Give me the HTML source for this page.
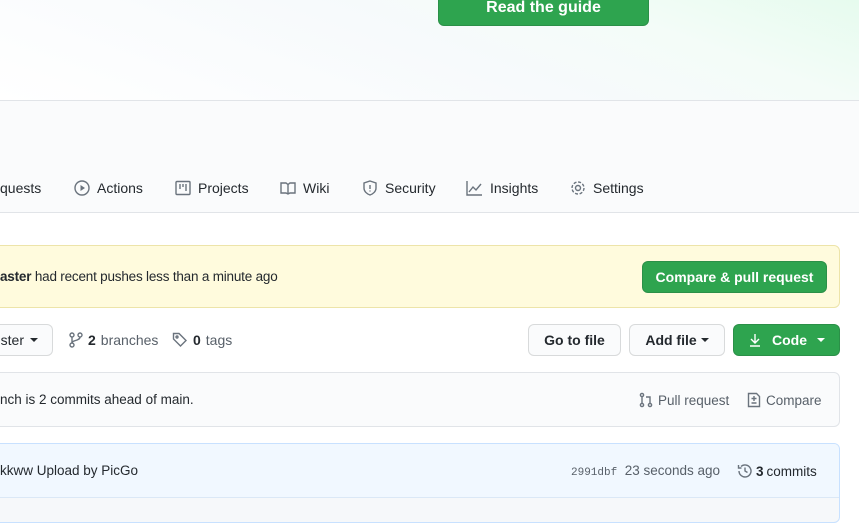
<!DOCTYPE html><html><head><style>
*{box-sizing:border-box;margin:0;padding:0}
body{width:859px;height:513px;overflow:hidden;position:relative;font-family:"Liberation Sans",sans-serif;font-size:14px;color:#24292e;background:#fff}
.a{position:absolute}
.hero{left:0;top:0;width:859px;height:101px;border-bottom:1px solid #e1e4e8;background:linear-gradient(200deg,#e6fbee 0%,#f4fcf8 25%,#f7fafc 50%,#fff 100%)}
.btn{position:absolute;border:1px solid rgba(27,31,35,.15);border-radius:6px;background:#fafbfc;font-weight:bold;display:flex;align-items:center;justify-content:center;font-size:14px}
.g{background:#2ea44f;color:#fff;border-color:rgba(27,31,35,.15)}
.nav{left:0;top:101px;width:859px;height:112px;background:#fafbfc;border-bottom:1px solid #e1e4e8}
.tab{position:absolute;top:180px;font-size:14px;color:#24292e;display:flex;align-items:center;gap:7px}
svg{fill:none;stroke:#6a737d;stroke-width:1.4}
.caret{display:inline-block;width:0;height:0;border-left:4px solid transparent;border-right:4px solid transparent;border-top:4px solid currentColor;margin-left:6px;vertical-align:middle}
</style></head><body>
<div class="a hero"></div>
<div class="btn g" style="left:438px;top:-14px;width:211px;height:40px;font-size:16px;align-items:flex-end;padding-bottom:8px">Read the guide</div>
<div class="a nav"></div>
<div class="tab" style="left:0">quests</div>
<div class="tab" style="left:74px"><svg width="16" height="16"><circle cx="8" cy="8" r="7"/><path d="M6.5 5v6l4.5-3z" fill="#6a737d" stroke="none"/></svg>Actions</div>
<div class="tab" style="left:175px"><svg width="16" height="16"><rect x="1" y="1.5" width="14" height="13" rx="1"/><path d="M5 4v5M8 4v3M11 4v7"/></svg>Projects</div>
<div class="tab" style="left:280px"><svg width="16" height="16"><path d="M1 3h5l2 1.5L10 3h5v10h-5l-2 1-2-1H1zM8 4.5V14"/></svg>Wiki</div>
<div class="tab" style="left:362px"><svg width="16" height="16"><path d="M8 1l6 2v5c0 3.5-3 6-6 7-3-1-6-3.5-6-7V3z"/><path d="M8 5v4M8 10.5v1"/></svg>Security</div>
<div class="tab" style="left:466px"><svg width="17" height="16"><path d="M1 1v14h15M3 12l4-5 3 3 5-6"/></svg>Insights</div>
<div class="tab" style="left:570px"><svg width="16" height="16"><circle cx="8" cy="8" r="2.5"/><circle cx="8" cy="8" r="6" stroke-dasharray="3 1.7"/></svg>Settings</div>
<div class="a" style="left:-10px;top:245px;width:850px;height:63px;background:#fffbdd;border:1px solid #ede4a9;border-radius:6px"></div>
<div class="a" style="left:0;top:269px;font-size:13.5px;letter-spacing:-0.2px"><b>aster</b> had recent pushes less than a minute ago</div>
<div class="btn g" style="left:642px;top:261px;width:185px;height:32px">Compare &amp; pull request</div>
<div class="btn" style="left:-20px;top:324px;width:73px;height:32px;justify-content:flex-end;padding-right:14px;font-weight:normal"><span style="font-weight:normal">ster</span><span class="caret"></span></div>
<div class="a" style="left:69px;top:332px;display:flex;align-items:center;gap:5px;color:#586069"><svg width="14" height="16"><circle cx="3" cy="3" r="2"/><circle cx="3" cy="13" r="2"/><circle cx="11" cy="3" r="2"/><path d="M3 5v6M11 5c0 4-8 3-8 6"/></svg><b style="color:#24292e">2</b> branches</div>
<div class="a" style="left:172px;top:332px;display:flex;align-items:center;gap:5px;color:#586069"><svg width="16" height="16"><path d="M1.5 2v5l7 7 5.5-5.5-7-7H1.5z"/><circle cx="5" cy="5" r="1"/></svg><b style="color:#24292e">0</b> tags</div>
<div class="btn" style="left:528px;top:324px;width:93px;height:32px">Go to file</div>
<div class="btn" style="left:629px;top:324px;width:96px;height:32px">Add file<span class="caret" style="margin-left:4px"></span></div>
<div class="btn g" style="left:733px;top:324px;width:107px;height:32px"><svg width="14" height="16" style="stroke:#fff;margin-right:10px"><path d="M7 2v9M3 7l4 4 4-4M2 14h10"/></svg>Code<span class="caret" style="margin-left:10px"></span></div>
<div class="a" style="left:-10px;top:372px;width:850px;height:55px;background:#fafbfc;border:1px solid #e1e4e8;border-radius:6px"></div>
<div class="a" style="left:0;top:392px;font-size:13.5px">nch is 2 commits ahead of main.</div>
<div class="a" style="left:638px;top:392px;font-size:13.5px;color:#586069;display:flex;gap:4px;align-items:center"><svg width="16" height="16"><circle cx="4" cy="3" r="1.6"/><circle cx="4" cy="13" r="1.6"/><circle cx="12" cy="13" r="1.6"/><path d="M4 4.6v6.8M12 11.4V5H8"/></svg>Pull request</div>
<div class="a" style="left:746px;top:392px;font-size:13.5px;color:#586069;display:flex;gap:4px;align-items:center"><svg width="16" height="16"><path d="M2.5 1.5h8l3 3v10h-11z"/><path d="M8 4v5M5.5 6.5h5M5.5 11h5"/></svg>Compare</div>
<div class="a" style="left:-10px;top:443px;width:850px;height:80px;background:#f6f8fa;border:1px solid #c8e1ff;border-radius:6px;overflow:hidden"><div style="height:54px;background:#f1f8ff;border-bottom:1px solid #dbe8f6"></div></div>
<div class="a" style="left:0;top:463px;font-size:13.5px">kkww Upload by PicGo</div>
<div class="a" style="left:571px;top:463px;font-size:13.5px;color:#586069"><span style="font-family:'Liberation Mono',monospace;font-size:11px">2991dbf</span>&nbsp; 23 seconds ago</div>
<div class="a" style="left:737px;top:463px;font-size:13.5px;display:flex;align-items:center;gap:3px"><svg width="16" height="16"><path d="M2 8a6 6 0 1 0 2-4.5M1.5 2v3h3M8 4.5V8l2.5 1.5"/></svg><b>3</b> commits</div>
</body></html>
